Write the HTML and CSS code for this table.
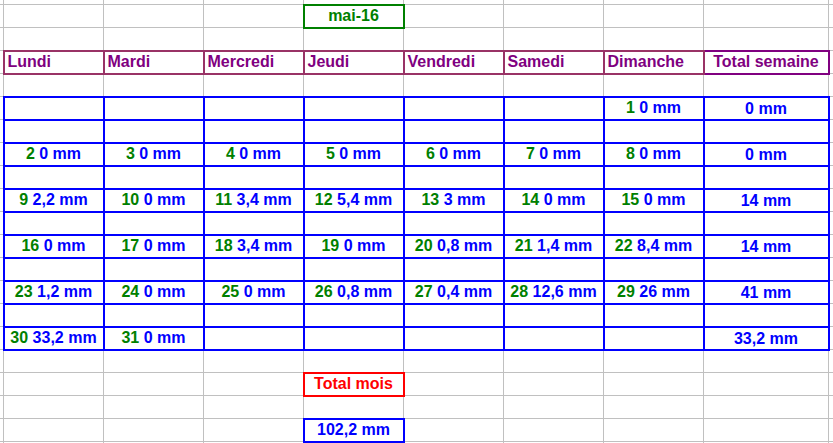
FILE: index.html
```html
<!DOCTYPE html>
<html lang="fr">
<head>
<meta charset="utf-8">
<title>Pluviométrie mai-16</title>
<link rel="stylesheet" href="styles.css">
</head>
<body>
<div class="sheet">
<table class="grid">
<colgroup>
<col class="c-std"><col class="c-std"><col class="c-std"><col class="c-std"><col class="c-std"><col class="c-std"><col class="c-std"><col class="c-std"><col class="c-wide"><col class="c-std">
</colgroup>
<tbody>
<tr><td></td><td></td><td></td><td></td><td></td><td></td><td></td><td></td><td></td><td></td></tr>
<tr><td></td><td></td><td></td><td></td><td class="month">mai-16</td><td></td><td></td><td></td><td></td><td></td></tr>
<tr><td></td><td></td><td></td><td></td><td></td><td></td><td></td><td></td><td></td><td></td></tr>
<tr><td></td><td class="hd">Lundi</td><td class="hd">Mardi</td><td class="hd">Mercredi</td><td class="hd">Jeudi</td><td class="hd">Vendredi</td><td class="hd">Samedi</td><td class="hd">Dimanche</td><td class="ht">Total semaine</td><td></td></tr>
<tr><td></td><td></td><td></td><td></td><td></td><td></td><td></td><td></td><td></td><td></td></tr>
<tr><td></td><td class="b"></td><td class="b"></td><td class="b"></td><td class="b"></td><td class="b"></td><td class="b"></td><td class="b"><span class="d">1</span> 0 mm</td><td class="b tot">0 mm</td><td></td></tr>
<tr><td></td><td class="b"></td><td class="b"></td><td class="b"></td><td class="b"></td><td class="b"></td><td class="b"></td><td class="b"></td><td class="b"></td><td></td></tr>
<tr><td></td><td class="b"><span class="d">2</span> 0 mm</td><td class="b"><span class="d">3</span> 0 mm</td><td class="b"><span class="d">4</span> 0 mm</td><td class="b"><span class="d">5</span> 0 mm</td><td class="b"><span class="d">6</span> 0 mm</td><td class="b"><span class="d">7</span> 0 mm</td><td class="b"><span class="d">8</span> 0 mm</td><td class="b tot">0 mm</td><td></td></tr>
<tr><td></td><td class="b"></td><td class="b"></td><td class="b"></td><td class="b"></td><td class="b"></td><td class="b"></td><td class="b"></td><td class="b"></td><td></td></tr>
<tr><td></td><td class="b"><span class="d">9</span> 2,2 mm</td><td class="b"><span class="d">10</span> 0 mm</td><td class="b"><span class="d">11</span> 3,4 mm</td><td class="b"><span class="d">12</span> 5,4 mm</td><td class="b"><span class="d">13</span> 3 mm</td><td class="b"><span class="d">14</span> 0 mm</td><td class="b"><span class="d">15</span> 0 mm</td><td class="b tot">14 mm</td><td></td></tr>
<tr><td></td><td class="b"></td><td class="b"></td><td class="b"></td><td class="b"></td><td class="b"></td><td class="b"></td><td class="b"></td><td class="b"></td><td></td></tr>
<tr><td></td><td class="b"><span class="d">16</span> 0 mm</td><td class="b"><span class="d">17</span> 0 mm</td><td class="b"><span class="d">18</span> 3,4 mm</td><td class="b"><span class="d">19</span> 0 mm</td><td class="b"><span class="d">20</span> 0,8 mm</td><td class="b"><span class="d">21</span> 1,4 mm</td><td class="b"><span class="d">22</span> 8,4 mm</td><td class="b tot">14 mm</td><td></td></tr>
<tr><td></td><td class="b"></td><td class="b"></td><td class="b"></td><td class="b"></td><td class="b"></td><td class="b"></td><td class="b"></td><td class="b"></td><td></td></tr>
<tr><td></td><td class="b"><span class="d">23</span> 1,2 mm</td><td class="b"><span class="d">24</span> 0 mm</td><td class="b"><span class="d">25</span> 0 mm</td><td class="b"><span class="d">26</span> 0,8 mm</td><td class="b"><span class="d">27</span> 0,4 mm</td><td class="b"><span class="d">28</span> 12,6 mm</td><td class="b"><span class="d">29</span> 26 mm</td><td class="b tot">41 mm</td><td></td></tr>
<tr><td></td><td class="b"></td><td class="b"></td><td class="b"></td><td class="b"></td><td class="b"></td><td class="b"></td><td class="b"></td><td class="b"></td><td></td></tr>
<tr><td></td><td class="b"><span class="d">30</span> 33,2 mm</td><td class="b"><span class="d">31</span> 0 mm</td><td class="b"></td><td class="b"></td><td class="b"></td><td class="b"></td><td class="b"></td><td class="b tot">33,2 mm</td><td></td></tr>
<tr><td></td><td></td><td></td><td></td><td></td><td></td><td></td><td></td><td></td><td></td></tr>
<tr><td></td><td></td><td></td><td></td><td class="red">Total mois</td><td></td><td></td><td></td><td></td><td></td></tr>
<tr><td></td><td></td><td></td><td></td><td></td><td></td><td></td><td></td><td></td><td></td></tr>
<tr><td></td><td></td><td></td><td></td><td class="b">102,2 mm</td><td></td><td></td><td></td><td></td><td></td></tr>
<tr><td></td><td></td><td></td><td></td><td></td><td></td><td></td><td></td><td></td><td></td></tr>
</tbody>
</table>
</div>
</body>
</html>
```
FILE: styles.css
```css
html, body {
  margin: 0;
  padding: 0;
  background: #ffffff;
}

.sheet {
  width: 833px;
  height: 443px;
  overflow: hidden;
}

.grid {
  border-collapse: collapse;
  table-layout: fixed;
  width: 1025px;
  margin-top: -19px;
  margin-left: -97px;
}

.c-std { width: 100px; }
.c-wide { width: 125px; }

.grid td {
  height: 23px;
  padding: 0 3px 2px;
  border: 1px solid #c0c0c0;
  font: bold 16px/18px "Liberation Sans", Arial, sans-serif;
  color: #0000ff;
  text-align: center;
  vertical-align: bottom;
  white-space: nowrap;
  overflow: hidden;
  box-sizing: border-box;
}

.grid td.month {
  border: 2px solid #008000;
  color: #008000;
}

.grid td.hd {
  border: 2px solid #993366;
  color: #800080;
  text-align: left;
}

.grid td.ht {
  border: 2px solid #800080;
  color: #800080;
}

.grid td.b {
  border: 2px solid #0000ff;
  color: #0000ff;
}

.grid td.tot {
  padding-bottom: 1px;
}

.grid td.red {
  border: 2px solid #ff0000;
  color: #ff0000;
}

.d {
  color: #008000;
}
```
